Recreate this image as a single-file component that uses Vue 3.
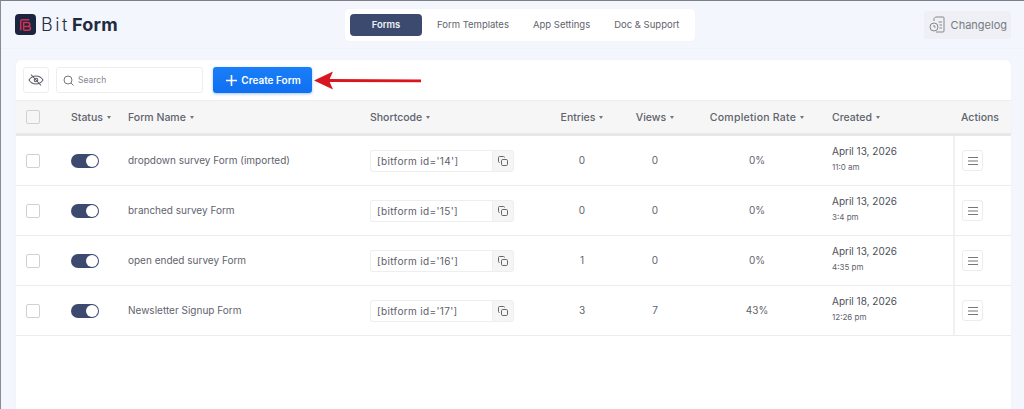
<script setup>
const columns = [
  { label: '', cls: 'c-check', sort: false },
  { label: 'Status', cls: 'c-status', sort: true },
  { label: 'Form Name', cls: 'c-name', sort: true },
  { label: 'Shortcode', cls: 'c-short', sort: true },
  { label: 'Entries', cls: 'c-num', sort: true },
  { label: 'Views', cls: 'c-num', sort: true },
  { label: 'Completion Rate', cls: 'c-num c-rate', sort: true },
  { label: 'Created', cls: 'c-created', sort: true },
  { label: 'Actions', cls: 'c-actions', sort: false }
]
const rows = [
  { name: 'dropdown survey Form (imported)', id: 14, entries: 0, views: 0, rate: '0%', date: 'April 13, 2026', time: '11:0 am' },
  { name: 'branched survey Form', id: 15, entries: 0, views: 0, rate: '0%', date: 'April 13, 2026', time: '3:4 pm' },
  { name: 'open ended survey Form', id: 16, entries: 1, views: 0, rate: '0%', date: 'April 13, 2026', time: '4:35 pm' },
  { name: 'Newsletter Signup Form', id: 17, entries: 3, views: 7, rate: '43%', date: 'April 18, 2026', time: '12:26 pm' }
]
const tabs = ['Forms', 'Form Templates', 'App Settings', 'Doc & Support']
</script>

<template>
  <div class="page">
    <header class="topbar">
      <div class="brand">
        <svg class="logo" viewBox="0 0 22 22">
          <rect width="22" height="22" rx="4" fill="#1c2540" />
          <path d="M6 17V7.5C6 6.5 6.7 6 7.5 6H15" fill="none" stroke="#d1304f" stroke-width="1.6" />
          <path d="M9 17V9h4.5a2 2 0 0 1 0 4H9.5h4.7a2 2 0 0 1 0 4H9" fill="none" stroke="#d1304f" stroke-width="1.6" />
        </svg>
        <span class="brand-text"><span class="bit">Bit</span><b>Form</b></span>
      </div>
      <nav class="tabs">
        <a v-for="(t, i) in tabs" :key="t" class="tab" :class="{ active: i === 0 }">{{ t }}</a>
      </nav>
      <button class="changelog">
        <svg width="17" height="17" viewBox="0 0 17 17" fill="none" stroke="#888" stroke-width="1">
          <path d="M5 5V2.5L6.5 1H14a1 1 0 0 1 1 1v13a1 1 0 0 1-1 1H7" />
          <circle cx="5" cy="11" r="4" />
          <path d="M5 9v2h1.6M9.5 6h3.5M10.5 9H13M10.5 12H13" />
        </svg>
        Changelog
      </button>
    </header>

    <main class="card">
      <div class="toolbar">
        <button class="eye">
          <svg width="16" height="16" viewBox="0 0 16 16" fill="none" stroke="#5a5f6a" stroke-width="1.1">
            <path d="M1 8s2.6-4 7-4 7 4 7 4-2.6 4-7 4-7-4-7-4Z" />
            <circle cx="8" cy="8" r="1.8" />
            <path d="M3 2.5l10 11" />
          </svg>
        </button>
        <label class="search">
          <svg width="11" height="11" viewBox="0 0 11 11" fill="none" stroke="#777" stroke-width="1">
            <circle cx="5" cy="5" r="4" />
            <path d="M8 8l2.5 2.5" />
          </svg>
          <span>Search</span>
        </label>
        <button class="create">
          <svg width="11" height="11" viewBox="0 0 11 11" stroke="#fff" stroke-width="1.6"><path d="M5.5 0v11M0 5.5h11" /></svg>
          Create Form
        </button>
      </div>

      <div class="grid head">
        <div v-for="c in columns" :key="c.cls + c.label" class="cell" :class="c.cls">
          <span v-if="c.cls === 'c-check'" class="check"></span>
          <template v-else>{{ c.label }}<i v-if="c.sort" class="caret"></i></template>
        </div>
      </div>

      <div v-for="r in rows" :key="r.id" class="grid row">
        <div class="cell c-check"><span class="check"></span></div>
        <div class="cell c-status"><span class="toggle"><span class="knob"></span></span></div>
        <div class="cell c-name">{{ r.name }}</div>
        <div class="cell c-short">
          <span class="code">[bitform id='{{ r.id }}']</span>
          <span class="copy">
            <svg width="10" height="10" viewBox="0 0 10 10" fill="none" stroke="#666" stroke-width="1">
              <rect x="3.5" y="3.5" width="6" height="6" rx="1.2" />
              <path d="M6.5 1.5V1.4A1 1 0 0 0 5.5.5h-4a1 1 0 0 0-1 1v4a1 1 0 0 0 1 1h.2" />
            </svg>
          </span>
        </div>
        <div class="cell c-num">{{ r.entries }}</div>
        <div class="cell c-num">{{ r.views }}</div>
        <div class="cell c-num">{{ r.rate }}</div>
        <div class="cell c-created">
          <div class="date">{{ r.date }}</div>
          <div class="time">{{ r.time }}</div>
        </div>
        <div class="cell c-actions sep">
          <span class="menu">
            <svg width="10" height="8" viewBox="0 0 10 8" stroke="#777" stroke-width="1"><path d="M0 .5h10M0 4h10M0 7.5h10" /></svg>
          </span>
        </div>
      </div>
    </main>

    <svg class="arrow" width="110" height="20" viewBox="0 0 110 20">
      <path d="M14 9 L107 9.6 V12.2 L14 12Z" fill="#d9161f" />
      <path d="M0 10.5 L19 1.5 L15 10.5 L19 19.5Z" fill="#d9161f" />
    </svg>
  </div>
</template>

<style>
html, body { margin: 0; padding: 0; background: #f4f6fd; overflow: hidden; }
</style>

<style scoped>
.page {
  position: relative;
  box-sizing: border-box;
  width: 1024px;
  height: 409px;
  overflow: hidden;
  background: #f4f6fd;
  border-top: 1px solid #7d7f86;
  border-left: 1px solid #8a8c94;
  font-family: "Inter", "Liberation Sans", sans-serif;
  color: #4a4f59;
}
.topbar {
  display: grid;
  grid-template-columns: 330px 350px 1fr;
  align-items: center;
  height: 47px;
  padding-left: 14px;
  border-bottom: 1px solid #f0f2f9;
}
.brand { display: flex; align-items: center; gap: 5px; }
.logo { width: 21px; height: 21px; }
.brand-text { font-size: 18px; color: #2a3042; letter-spacing: .2px; }
.bit { font-weight: 300; letter-spacing: 2.6px; margin-right: 2px; }
.brand-text b { font-weight: 700; color: #222a3e; }
.tabs {
  display: flex;
  align-items: center;
  box-sizing: border-box;
  width: 350px;
  height: 32px;
  padding: 0 4px 0 5px;
  background: #fff;
  border-radius: 4px;
  box-shadow: 0 0 1px #e3e6ef;
}
.tab {
  flex: none;
  font-size: 9.5px;
  color: #5f636d;
  white-space: nowrap;
  padding: 0 12px;
}
.tab.active {
  box-sizing: border-box;
  width: 72px;
  padding: 0;
  margin-right: 3px;
  line-height: 22px;
  text-align: center;
  color: #eef0f6;
  font-weight: 600;
  background: #3c4a70;
  border-radius: 4px;
}
.changelog {
  justify-self: end;
  display: flex;
  align-items: center;
  gap: 5px;
  height: 28px;
  margin-right: 13px;
  padding: 0 4px 0 5px;
  border: 0;
  border-radius: 3px;
  background: #eef0f5;
  color: #777b82;
  font: 11px "Inter", sans-serif;
}
.card {
  box-sizing: border-box;
  width: 995px;
  height: 360px;
  margin: 11px 0 0 15px;
  background: #fff;
  border-radius: 5px 5px 0 0;
  box-shadow: 0 0 1px #d9deea;
}
.toolbar {
  display: flex;
  align-items: center;
  height: 40px;
  padding-left: 7px;
}
.eye {
  display: flex;
  align-items: center;
  justify-content: center;
  width: 26px;
  height: 26px;
  padding: 0;
  background: #fff;
  border: 1px solid #eceef2;
  border-radius: 3px;
}
.search {
  display: flex;
  align-items: center;
  gap: 4px;
  box-sizing: border-box;
  width: 147px;
  height: 26px;
  margin-left: 7px;
  padding-left: 6px;
  border: 1px solid #eceef2;
  border-radius: 3px;
  font-size: 8.5px;
  color: #85888f;
}
.create {
  display: flex;
  align-items: center;
  justify-content: center;
  gap: 4px;
  width: 99px;
  height: 26px;
  margin-left: 10px;
  padding: 0 0 0 2px;
  border: 0;
  border-radius: 3px;
  background: linear-gradient(#1a7ff8, #0f6ff0);
  box-shadow: 0 1px 3px #9cc4f7;
  color: #fff;
  font: 600 10px "Inter", sans-serif;
}
.grid {
  display: grid;
  grid-template-columns: 55px 57px 242px 182px 60px 86px 118px 137px 58px;
  align-items: center;
}
.head {
  box-sizing: border-box;
  height: 36px;
  background: #f6f6f6;
  border-top: 1px solid #eeeeee;
  border-bottom: 3px solid #e8e8ea;
  font-size: 10.5px;
  font-weight: 500;
  color: #5f636d;
}
.row {
  box-sizing: border-box;
  height: 50px;
  border-bottom: 1px solid #ececee;
  font-size: 10px;
  color: #5f636d;
}
.cell { white-space: nowrap; }
.c-check { padding-left: 10px; display: flex; }
.c-num { text-align: center; }
.c-rate { letter-spacing: .25px; }
.row .c-name { padding-bottom: 2px; }
.row .c-num { padding-bottom: 1px; }
.c-created { padding-left: 16px; }
.row .c-created { padding-bottom: 5px; }
.c-actions { padding-left: 8px; }
.caret {
  display: inline-block;
  margin-left: 4px;
  vertical-align: 2px;
  border-left: 2px solid transparent;
  border-right: 2px solid transparent;
  border-top: 3px solid #777;
}
.check {
  box-sizing: border-box;
  width: 14px;
  height: 14px;
  background: #fff;
  border: 1px solid #cfd1d5;
  border-radius: 2px;
}
.head .check { background: #f6f6f6; }
.toggle {
  display: block;
  box-sizing: border-box;
  width: 28px;
  height: 14px;
  background: #3c4a70;
  border-radius: 7px;
  position: relative;
}
.knob {
  position: absolute;
  top: 1px;
  right: 1px;
  width: 12px;
  height: 12px;
  background: #fff;
  border-radius: 50%;
}
.c-short { display: flex; align-items: center; }
.code {
  box-sizing: border-box;
  width: 122px;
  height: 22px;
  padding-left: 6px;
  line-height: 20px;
  border: 1px solid #eceef0;
  border-right: 0;
  border-radius: 3px 0 0 3px;
  letter-spacing: .35px;
  color: #5c6068;
}
.copy {
  display: flex;
  align-items: center;
  justify-content: center;
  box-sizing: border-box;
  width: 22px;
  height: 22px;
  background: #f5f5f6;
  border: 1px solid #eceef0;
  border-radius: 0 3px 3px 0;
}
.date { font-size: 10px; color: #4a4f59; font-weight: 400; }
.time { margin-top: 5px; font-size: 8px; color: #5f636d; }
.sep {
  align-self: stretch;
  display: flex;
  align-items: center;
  border-left: 2px solid #f0f0f1;
}
.menu {
  display: flex;
  align-items: center;
  justify-content: center;
  box-sizing: border-box;
  width: 21px;
  height: 21px;
  margin-left: -1px;
  background: #fff;
  border: 1px solid #ececee;
  border-radius: 3px;
}
.arrow {
  position: absolute;
  left: 313px;
  top: 69px;
}
</style>
